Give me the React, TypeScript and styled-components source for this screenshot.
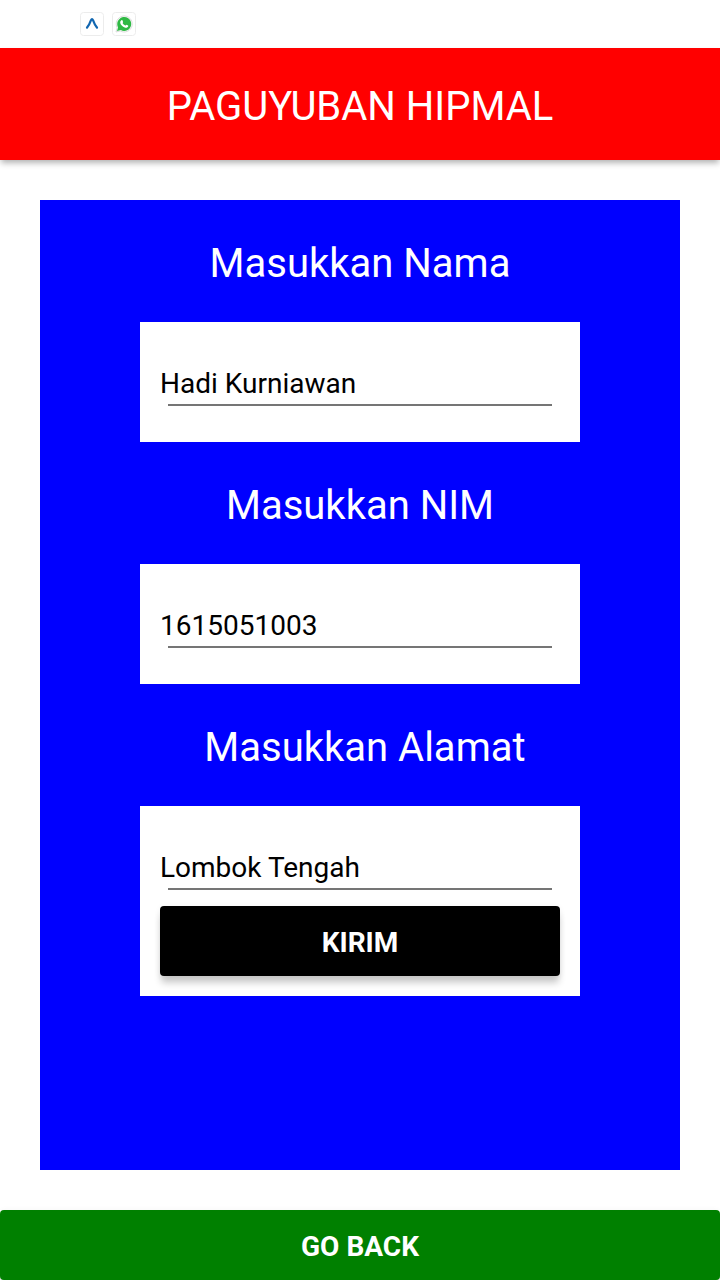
import React from 'react';
import styled, { createGlobalStyle } from 'styled-components';

const GlobalStyle = createGlobalStyle`
  *, *::before, *::after {
    box-sizing: border-box;
  }
  body {
    margin: 0;
    background: #ffffff;
    font-family: Roboto, sans-serif;
  }
`;

const Screen = styled.div`
  display: flex;
  flex-direction: column;
  min-height: 100vh;
`;

const StatusBar = styled.div`
  display: flex;
  align-items: center;
  gap: 8px;
  height: 48px;
  padding-left: 80px;
`;

const Header = styled.header`
  padding: 35px 20px 29px;
  background: #ff0000;
  box-shadow: 0 4px 6px -1px rgba(0, 0, 0, 0.3);
`;

const Title = styled.h1`
  margin: 0;
  color: #ffffff;
  font-size: 40px;
  font-weight: 400;
  line-height: 48px;
  text-align: center;
`;

const Panel = styled.form`
  flex: 1;
  margin: 40px;
  padding: 0 100px;
  background: #0000ff;
`;

const Label = styled.label`
  display: block;
  padding: 40px 0 34px;
  color: #ffffff;
  font-size: 40px;
  line-height: 48px;
  text-align: center;
  white-space: pre;
`;

const Card = styled.div`
  padding: 20px;
  background: #ffffff;
`;

const Field = styled.div`
  padding-bottom: 16px;

  &::after {
    content: '';
    display: block;
    height: 2px;
    margin: 0 8px;
    background: #757575;
  }
`;

const TextInput = styled.input`
  display: block;
  width: 100%;
  height: 62px;
  padding: 20px 0 0;
  border: 0;
  outline: 0;
  background: transparent;
  color: #000000;
  font-family: inherit;
  font-size: 28px;
`;

const ActionButton = styled.button<{ $color: string }>`
  display: block;
  width: 100%;
  height: 70px;
  padding: 2px 16px 0;
  border: 0;
  border-radius: 4px;
  background: ${({ $color }) => $color};
  box-shadow: 0 8px 7px -1px rgba(0, 0, 0, 0.2), 0 1px 6px rgba(0, 0, 0, 0.06);
  color: #ffffff;
  font-family: inherit;
  font-size: 28px;
  font-weight: 700;
  text-transform: uppercase;
  cursor: pointer;
`;

const AppIcon = styled.svg`
  display: block;
  width: 24px;
  height: 24px;
`;

const IconFrame = () => (
  <rect x="0.5" y="0.5" width="23" height="23" rx="3" fill="#ffffff" stroke="#ececec" />
);

const fields = [
  { id: 'nama', label: 'Masukkan Nama', value: 'Hadi Kurniawan' },
  { id: 'nim', label: 'Masukkan NIM', value: '1615051003' },
  { id: 'alamat', label: ' Masukkan Alamat', value: 'Lombok Tengah' },
];

export default function App() {
  return (
    <>
      <GlobalStyle />
      <Screen>
        <StatusBar>
          <AppIcon viewBox="0 0 24 24" aria-hidden="true">
            <IconFrame />
            <path
              d="M7 15.6C8.6 14 10 11 11 8.2Q12 6 13 8.2C14 11 15.4 14 17 15.6"
              fill="none"
              stroke="#1166b0"
              strokeWidth="2.2"
              strokeLinecap="round"
            />
          </AppIcon>
          <AppIcon viewBox="0 0 24 24" aria-hidden="true">
            <IconFrame />
            <path
              d="M4 20L5.2 15.8A8 8 0 1 1 8.2 18.9Z"
              fill="#ffffff"
              stroke="#dcdcdc"
              strokeWidth="1"
            />
            <path d="M5 19L6.1 15.4A7 7 0 1 1 8.8 18.1Z" fill="#2fb944" />
            <path
              d="M9.4 8.2c.4-.4.8-.3 1 .1l.7 1.6c.1.4-.6.9-.6 1.2.6 1.2 1.6 2 2.8 2.5.4 0 .8-1 1.2-.9l1.6.8c.6.5-.3 2-1.5 2.2-2.7.3-6.2-2.7-6.4-5.3 0-.9.5-1.7 1.2-2.2z"
              fill="#ffffff"
            />
          </AppIcon>
        </StatusBar>

        <Header>
          <Title>PAGUYUBAN HIPMAL</Title>
        </Header>

        <Panel onSubmit={(event: React.FormEvent) => event.preventDefault()}>
          {fields.map(({ id, label, value }, index) => (
            <React.Fragment key={id}>
              <Label htmlFor={id}>{label}</Label>
              <Card>
                <Field>
                  <TextInput id={id} type="text" defaultValue={value} />
                </Field>
                {index === fields.length - 1 && (
                  <ActionButton type="submit" $color="#000000">
                    Kirim
                  </ActionButton>
                )}
              </Card>
            </React.Fragment>
          ))}
        </Panel>

        <ActionButton type="button" $color="#008000">
          Go Back
        </ActionButton>
      </Screen>
    </>
  );
}
